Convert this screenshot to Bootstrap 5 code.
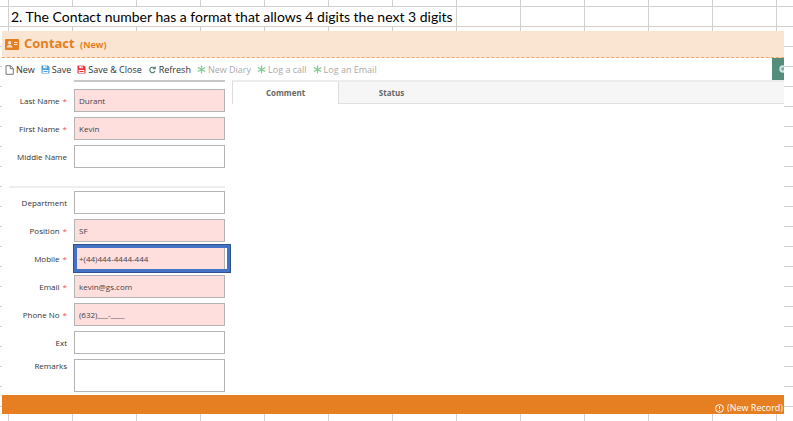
<!DOCTYPE html>
<html lang="en">
<head>
<meta charset="utf-8">
<meta name="viewport" content="width=device-width, initial-scale=1">
<title>Contact (New)</title>
<link href="https://cdn.jsdelivr.net/npm/bootstrap@5.3.0/dist/css/bootstrap.min.css" rel="stylesheet">
<style>
  :root { --brand: #e67e22; --line: #d0d0d0; }
  body {
    font-family: "Open Sans", "Noto Sans", sans-serif;
    color: #333;
    background:
      linear-gradient(to right, var(--line) 1px, transparent 1px) 8px 0 / 64px 20px,
      linear-gradient(to bottom, var(--line) 1px, transparent 1px) 0 6px / 64px 20px,
      #fff;
  }
  .sheet { padding: 7px 9px 7px 2px; }
  .note { font: 14px/19px Lato, "Liberation Sans", sans-serif; color: #000; background: #fff; margin: 0 0 5px 7px; padding: 0 6px 0 2px; height: 19px; width: 447px; white-space: nowrap; }
  .titlebar { height: 27px; padding: 0 3px; gap: 5px; background: #fae5d3; border-bottom: 1px dashed #f0a868; color: var(--brand); }
  .titlebar h1 { font-size: 13px; line-height: 26px; }
  .titlebar small { font-size: 9px; margin-left: 2px; }
  .tools { height: 22px; padding: 1px 0 0 3px; gap: 6px; }
  .tool { display: flex; align-items: center; gap: 2px; border: 0; padding: 0; background: none; font-size: 9px; line-height: 22px; color: #333; white-space: nowrap; }
  .tool:disabled { color: #aaa; }
  .side { width: 12px; height: 22px; background: #548d7b; border: 0; padding: 0; overflow: hidden; }
  .fields { width: 223px; padding-bottom: 3px; }
  .peek { height: 2px; margin-left: 72px; background: #c8c8c8; }
  .stack { display: grid; gap: 5px; }
  .names { margin-top: 7px; }
  .line { display: grid; grid-template-columns: 65px 151px; column-gap: 7px; }
  .line label { font-size: 8px; line-height: 23px; text-align: right; white-space: nowrap; }
  .line i { color: #f0504c; font-style: normal; margin-left: 3px; }
  .box { height: 23px; padding: 0 4px; border: 1px solid #b4b4b4; border-radius: 0; font-size: 8px; line-height: 21px; color: #444; background: #fff; min-height: 0; }
  .box:required { background: #ffdede; }
  textarea.box { height: 33px; resize: none; display: block; }
  .line .top-label { line-height: 13px; }
  .rule { height: 2px; margin: 18px 0 3px 7px; background: #eee; }
  .marked { position: relative; }
  .marked::after { content: ""; position: absolute; inset: -3px -6px -3px -1px; border: 4px solid #4472c4; outline: 1px solid #2f528f; outline-offset: -1px; pointer-events: none; }
  .tabs { height: 24px; margin-left: 7px; border-top: 2px solid #ececec; background: linear-gradient(to right, #fff 105px, #f6f6f6 105px); border-left: 1px solid #ddd; }
  .tabs button { width: 105px; height: 22px; border: 0; padding: 0; background: none; font-size: 8px; font-weight: 700; color: #666; }
  .tabs .rest { border-left: 1px solid #ddd; border-bottom: 1px solid #e0e0e0; }
  .statusbar { height: 19px; padding: 7px 1px 0; background: var(--brand); color: #fff; font-size: 9px; line-height: 12px; gap: 3px; }
</style>
</head>
<body>
<main class="sheet min-vh-100">
  <p class="note">2. The Contact number has a format that allows 4 digits the next 3 digits</p>
  <section class="bg-white">
    <header class="titlebar d-flex align-items-center">
      <svg width="14" height="11" viewBox="0 0 14 11" aria-hidden="true"><rect width="14" height="11" rx="1" fill="#e67e22"/><circle cx="4.6" cy="3.8" r="1.7" fill="#fae5d3"/><path d="M1.8 8.6V7.5Q2 6 4.6 6T7.4 7.5V8.6ZM9 3h3.5v1H9zM9 5h3.5v1H9z" fill="#fae5d3"/></svg>
      <h1 class="mb-0 fw-bold">Contact <small class="fw-bold">(New)</small></h1>
    </header>
    <div class="d-flex justify-content-between">
      <div class="tools d-flex">
        <button class="tool" type="button"><svg width="9" height="10" viewBox="0 0 9 10" fill="#fff" stroke="#777"><path d="M1 .7h4.5L8.3 3.5v5.8H1zM5.3.7v3h3"/></svg>New</button>
        <button class="tool" type="button"><svg width="9" height="9" viewBox="0 0 9 9"><path d="M.5.5h6.5l1.5 1.5v6.5h-8z" fill="#4a9fe0"/><path d="M2.3.8h3.8v2.4H2.3zM1.7 5h5.6v3H1.7z" fill="#fff"/><path d="M4.5 1h1v1.7h-1zM2.5 6h4v1h-4z" fill="#4a9fe0"/></svg>Save</button>
        <button class="tool" type="button"><svg width="9" height="9" viewBox="0 0 9 9"><path d="M.5.5h6.5l1.5 1.5v6.5h-8z" fill="#ed3338"/><path d="M2.3.8h3.8v2.4H2.3zM1.7 5h5.6v3H1.7z" fill="#fff"/><path d="M4.5 1h1v1.7h-1zM2.5 6h4v1h-4z" fill="#ed3338"/></svg>Save &amp; Close</button>
        <button class="tool" type="button"><svg width="9" height="8" viewBox="0 0 9 8" fill="none" stroke="#4b7f70" stroke-width="1.1"><path d="M6.6 2.2A2.7 2.7 0 1 0 7 5M7.2.6v2.2H4.8"/></svg>Refresh</button>
        <button class="tool" type="button" disabled><svg width="9" height="9" viewBox="0 0 9 9" stroke="#7dcc91" stroke-width="1.3"><path d="M4.5.5v8M.8 2.5l7.4 4M.8 6.5l7.4-4"/></svg>New Diary</button>
        <button class="tool" type="button" disabled><svg width="9" height="9" viewBox="0 0 9 9" stroke="#7dcc91" stroke-width="1.3"><path d="M4.5.5v8M.8 2.5l7.4 4M.8 6.5l7.4-4"/></svg>Log a call</button>
        <button class="tool" type="button" disabled><svg width="9" height="9" viewBox="0 0 9 9" stroke="#7dcc91" stroke-width="1.3"><path d="M4.5.5v8M.8 2.5l7.4 4M.8 6.5l7.4-4"/></svg>Log an Email</button>
      </div>
      <button class="side d-flex align-items-center justify-content-end" type="button" aria-label="Open side panel"><svg width="5" height="8" viewBox="0 0 5 8"><circle cx="4" cy="4" r="3.7" fill="#cfe6e2"/><path d="M2 3l3-1v3l-2 1z" fill="#86aaa5"/></svg></button>
    </div>
    <div class="d-flex">
      <form class="fields flex-shrink-0">
        <div class="peek"></div>
        <div class="stack names">
          <div class="line"><label for="last">Last Name<i>*</i></label><input id="last" class="box" value="Durant" required></div>
          <div class="line"><label for="first">First Name<i>*</i></label><input id="first" class="box" value="Kevin" required></div>
          <div class="line"><label for="middle">Middle Name</label><input id="middle" class="box"></div>
        </div>
        <div class="rule"></div>
        <div class="stack">
          <div class="line"><label for="dept">Department</label><input id="dept" class="box"></div>
          <div class="line"><label for="pos">Position<i>*</i></label><input id="pos" class="box" value="SF" required></div>
          <div class="line"><label for="mobile">Mobile<i>*</i></label><div class="marked d-flex"><input id="mobile" class="box w-100" value="+(44)444-4444-444" required></div></div>
          <div class="line"><label for="email">Email<i>*</i></label><input id="email" class="box" value="kevin@gs.com" required></div>
          <div class="line"><label for="phone">Phone No<i>*</i></label><input id="phone" class="box" value="(632)___-____" required></div>
          <div class="line"><label for="ext">Ext</label><input id="ext" class="box"></div>
          <div class="line"><label class="top-label" for="remarks">Remarks</label><textarea id="remarks" class="box"></textarea></div>
        </div>
      </form>
      <div class="flex-grow-1">
        <div class="tabs d-flex" role="tablist">
          <button type="button" role="tab" aria-selected="true">Comment</button>
          <div class="rest flex-grow-1 d-flex"><button type="button" role="tab" aria-selected="false">Status</button></div>
        </div>
      </div>
    </div>
    <footer class="statusbar d-flex justify-content-end align-items-center">
      <svg width="9" height="9" viewBox="0 0 9 9" fill="none" stroke="#fff"><circle cx="4.5" cy="4.5" r="3.9"/><path d="M4.5 2v3.2M4.5 6v1"/></svg>
      <span>(New Record)</span>
    </footer>
  </section>
</main>
<script src="https://cdn.jsdelivr.net/npm/bootstrap@5.3.0/dist/js/bootstrap.bundle.min.js"></script>
</body>
</html>
